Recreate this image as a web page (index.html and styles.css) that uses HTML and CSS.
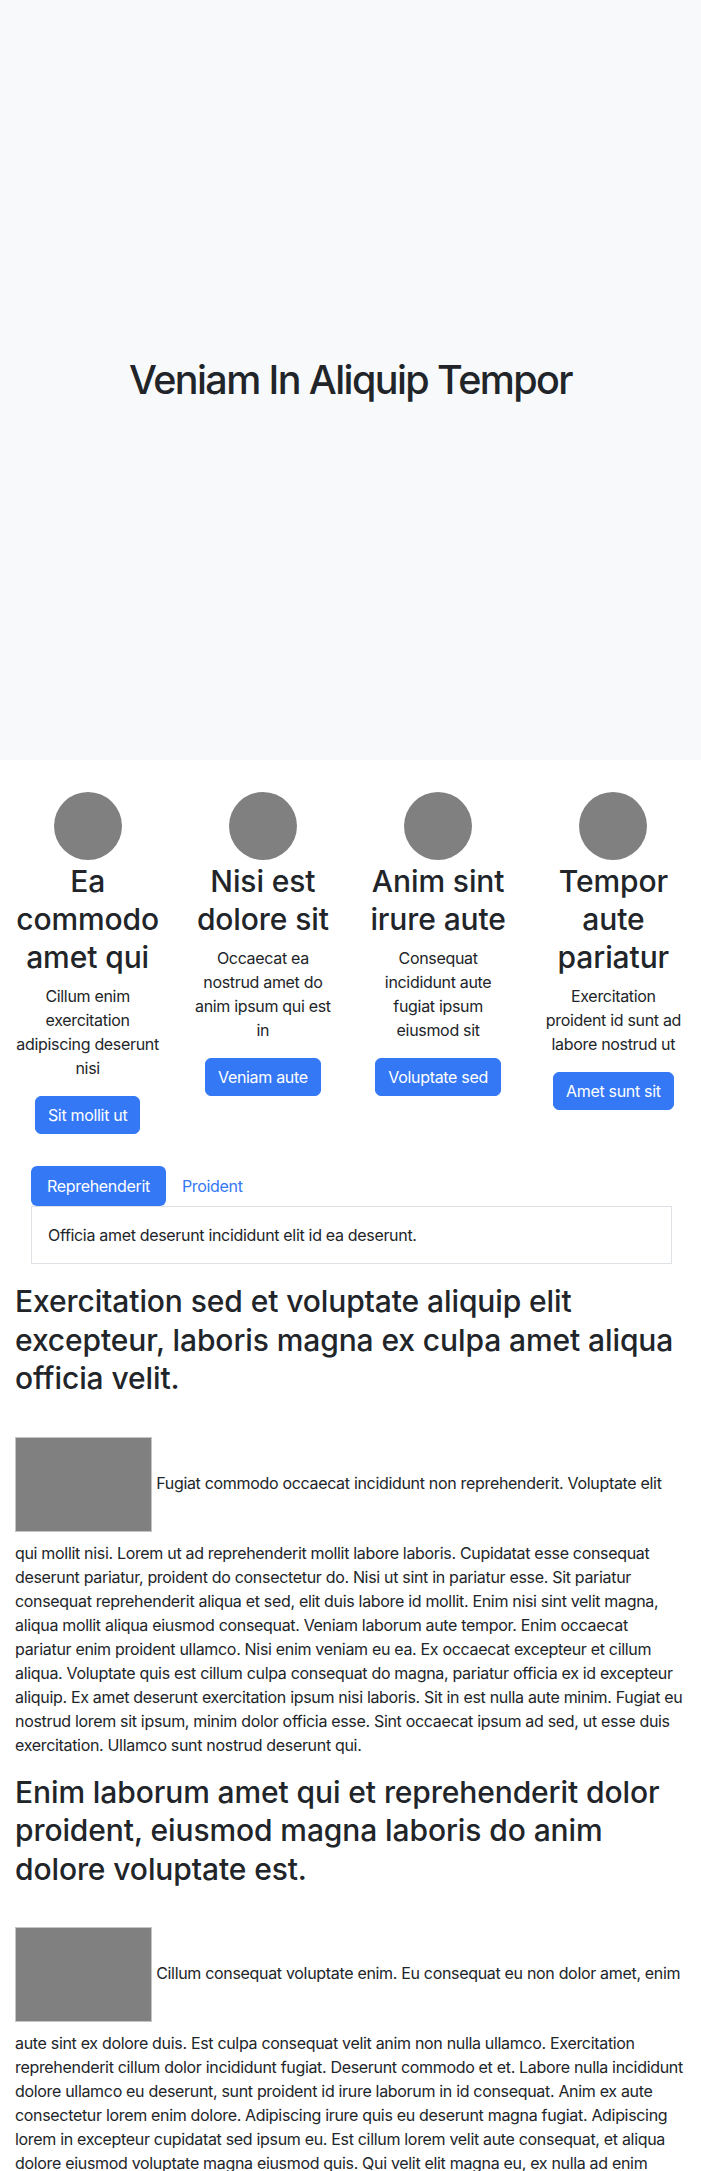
FILE: index.html
```html
<!DOCTYPE html>
<html lang="la">
<head>
<meta charset="utf-8">
<title>Veniam In Aliquip Tempor</title>
<link rel="stylesheet" href="styles.css">
</head>
<body>
<header class="hero">
  <h1 class="hero-title">Veniam In Aliquip Tempor</h1>
</header>

<section class="features">
  <div class="feature">
    <div class="avatar"></div>
    <h2 class="feature-title">Ea commodo amet qui</h2>
    <p class="feature-text">Cillum enim exercitation adipiscing deserunt nisi</p>
    <a class="btn" href="#">Sit mollit ut</a>
  </div>
  <div class="feature">
    <div class="avatar"></div>
    <h2 class="feature-title">Nisi est dolore sit</h2>
    <p class="feature-text">Occaecat ea nostrud amet do anim ipsum qui est in</p>
    <a class="btn" href="#">Veniam aute</a>
  </div>
  <div class="feature">
    <div class="avatar"></div>
    <h2 class="feature-title">Anim sint irure aute</h2>
    <p class="feature-text">Consequat incididunt aute fugiat ipsum eiusmod sit</p>
    <a class="btn" href="#">Voluptate sed</a>
  </div>
  <div class="feature">
    <div class="avatar"></div>
    <h2 class="feature-title">Tempor aute pariatur</h2>
    <p class="feature-text">Exercitation proident id sunt ad labore nostrud ut</p>
    <a class="btn" href="#">Amet sunt sit</a>
  </div>
</section>

<main class="content">
  <div class="tabs">
    <ul class="pills">
      <li><a class="pill active" href="#">Reprehenderit</a></li>
      <li><a class="pill" href="#">Proident</a></li>
    </ul>
    <div class="tab-pane">Officia amet deserunt incididunt elit id ea deserunt.</div>
  </div>

  <article class="article">
    <h2 class="article-title">Exercitation sed et voluptate aliquip elit excepteur, laboris magna ex culpa amet aliqua officia velit.</h2>
    <p class="article-text"><span class="thumb"></span> Fugiat commodo occaecat incididunt non reprehenderit. Voluptate elit qui mollit nisi. Lorem ut ad reprehenderit mollit labore laboris. Cupidatat esse consequat deserunt pariatur, proident do consectetur do. Nisi ut sint in pariatur esse. Sit pariatur consequat reprehenderit aliqua et sed, elit duis labore id mollit. Enim nisi sint velit magna, aliqua mollit aliqua eiusmod consequat. Veniam laborum aute tempor. Enim occaecat pariatur enim proident ullamco. Nisi enim veniam eu ea. Ex occaecat excepteur et cillum aliqua. Voluptate quis est cillum culpa consequat do magna, pariatur officia ex id excepteur aliquip. Ex amet deserunt exercitation ipsum nisi laboris. Sit in est nulla aute minim. Fugiat eu nostrud lorem sit ipsum, minim dolor officia esse. Sint occaecat ipsum ad sed, ut esse duis exercitation. Ullamco sunt nostrud deserunt qui.</p>
  </article>

  <article class="article">
    <h2 class="article-title">Enim laborum amet qui et reprehenderit dolor proident, eiusmod magna laboris do anim dolore voluptate est.</h2>
    <p class="article-text"><span class="thumb"></span> Cillum consequat voluptate enim. Eu consequat eu non dolor amet, enim aute sint ex dolore duis. Est culpa consequat velit anim non nulla ullamco. Exercitation reprehenderit cillum dolor incididunt fugiat. Deserunt commodo et et. Labore nulla incididunt dolore ullamco eu deserunt, sunt proident id irure laborum in id consequat. Anim ex aute consectetur lorem enim dolore. Adipiscing irure quis eu deserunt magna fugiat. Adipiscing lorem in excepteur cupidatat sed ipsum eu. Est cillum lorem velit aute consequat, et aliqua dolore eiusmod voluptate magna eiusmod quis. Qui velit elit magna eu, ex nulla ad enim laboris. Officia sunt do elit consequat, irure est aute laborum. Ut nisi veniam ad dolore.</p>
  </article>
</main>
</body>
</html>
```

FILE: styles.css
```css
* {
  box-sizing: border-box;
}

html, body {
  margin: 0;
  padding: 0;
}

body {
  font-family: Inter, "Noto Sans", "Liberation Sans", sans-serif;
  font-size: 16px;
  line-height: 24px;
  color: #212529;
  background: #ffffff;
  letter-spacing: -0.32px;
}

/* Hero */
.hero {
  height: 760px;
  background: #f8f9fa;
  display: flex;
  align-items: center;
  justify-content: center;
}

.hero-title {
  margin: 0;
  font-size: 39.5px;
  line-height: 48px;
  font-weight: 500;
  letter-spacing: -1.6px;
}

/* Features */
.features {
  display: grid;
  grid-template-columns: repeat(4, 1fr);
  padding-top: 32px;
  text-align: center;
}

.feature {
  padding: 0 14px;
  display: flex;
  flex-direction: column;
  align-items: center;
}

.avatar {
  width: 68px;
  height: 68px;
  border-radius: 50%;
  background: #808080;
}

.feature-title {
  margin: 2px 0 8px;
  font-size: 30px;
  line-height: 38px;
  font-weight: 500;
  letter-spacing: -0.1px;
}

.feature-text {
  margin: 0 0 16px;
}

.btn {
  display: inline-block;
  padding: 6px 12px;
  border: 1px solid #3478f6;
  border-radius: 6px;
  background: #3478f6;
  color: #ffffff;
  text-decoration: none;
  line-height: 24px;
}

/* Content */
.content {
  padding: 32px 14px 0 15px;
}

.tabs {
  margin: 0 15px 18px 16px;
}

.pills {
  display: flex;
  list-style: none;
  margin: 0;
  padding: 0;
}

.pill {
  display: block;
  padding: 8px 16px;
  line-height: 24px;
  color: #3478f6;
  text-decoration: none;
  border-radius: 6px;
}

.pill.active {
  background: #3478f6;
  color: #ffffff;
}

.tab-pane {
  border: 1px solid #dee2e6;
  padding: 16px;
}

.article-title {
  margin: 0 0 39px;
  font-size: 30px;
  line-height: 38.5px;
  font-weight: 500;
  letter-spacing: -0.1px;
}

.article-text {
  margin: 0 0 16px;
}

.thumb {
  display: inline-block;
  width: 137px;
  height: 95px;
  margin-bottom: 9px;
  background: #808080;
  border: 1px solid #c4c4c4;
  vertical-align: -52px;
}
```
